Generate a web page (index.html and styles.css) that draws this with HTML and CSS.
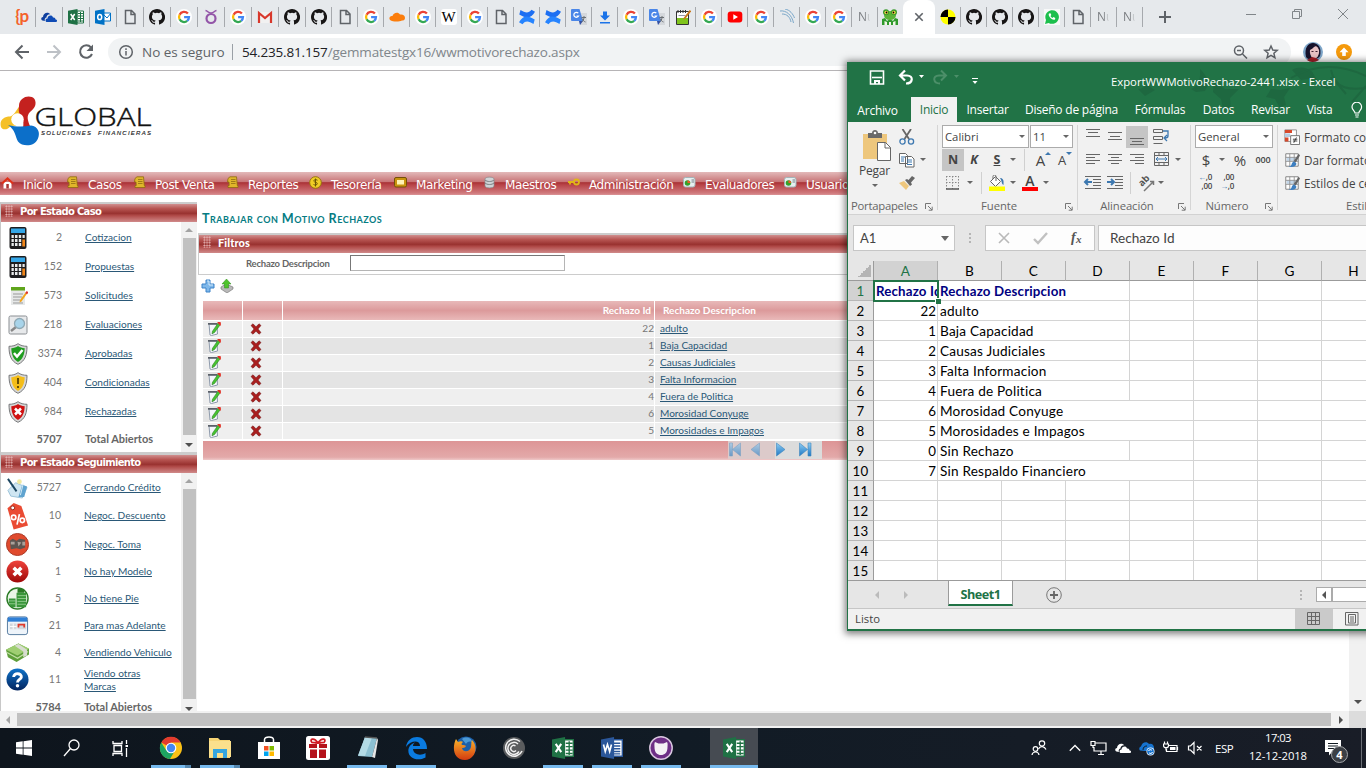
FILE: index.html
```html
<!DOCTYPE html>
<html lang="es">
<head>
<meta charset="utf-8">
<title>Trabajar con Motivo Rechazos</title>
<link rel="stylesheet" href="styles.css">
</head>
<body>
<svg class="defs" width="0" height="0">
<defs>
<linearGradient id="gr-red" x2="0" y2="1"><stop stop-color="#f0433c"/><stop offset="1" stop-color="#9e0808"/></linearGradient>
<linearGradient id="gr-blue" x2="0" y2="1"><stop stop-color="#0e73c9"/><stop offset="1" stop-color="#04245e"/></linearGradient>
<linearGradient id="gr-page" x2="0" y2="1"><stop stop-color="#8fcdf3"/><stop offset="1" stop-color="#1f78c4"/></linearGradient>
<linearGradient id="gr-fox" x2="0" y2="1"><stop stop-color="#f9b32a"/><stop offset="1" stop-color="#d33a10"/></linearGradient>
</defs>
<symbol id="g" viewBox="0 0 16 16"><circle cx="8" cy="8" r="8" fill="#fff"/><g fill="none" stroke-width="2.3"><path d="M11.9 4.6A5 5 0 0 0 3.6 5.7" stroke="#ea4335"/><path d="M3.6 5.7A5 5 0 0 0 3.6 10.3" stroke="#fbbc05"/><path d="M3.6 10.3A5 5 0 0 0 11.2 11.9" stroke="#34a853"/><path d="M11.2 11.9A5 5 0 0 0 13 8.1H8.1" stroke="#4285f4"/></g></symbol>
<symbol id="gh" viewBox="0 0 16 16"><path fill="#171515" d="M8 0C3.6 0 0 3.6 0 8c0 3.5 2.3 6.500 5.500 7.600.4.100.550-.170.550-.380v-1.500c-2.200.500-2.700-.940-2.700-.940-.360-.920-.890-1.170-.890-1.170-.730-.500.050-.490.050-.490.800.060 1.230.830 1.230.830.710 1.230 1.870.870 2.330.660.070-.520.280-.870.500-1.070-1.780-.200-3.640-.890-3.640-3.950 0-.870.310-1.590.820-2.150-.080-.200-.360-1.020.080-2.120 0 0 .670-.210 2.200.820a7.600 7.600 0 0 1 4 0c1.530-1.040 2.200-.820 2.200-.820.440 1.100.160 1.920.080 2.120.510.560.820 1.270.820 2.150 0 3.070-1.870 3.750-3.650 3.950.290.250.540.730.540 1.480v2.200c0 .210.150.460.550.380A8 8 0 0 0 8 0"/></symbol>
<symbol id="doc" viewBox="0 0 16 16"><path d="M3.500 1.500h6l3.500 3.500v9.500H3.500zM9 1.500V5.500h4" fill="none" stroke="#5f6368" stroke-width="1.500"/></symbol>
<symbol id="xl" viewBox="0 0 16 16"><path d="M9 2h6.500v12H9z" fill="#fff" stroke="#207245"/><path d="M10 4.500h5M10 7h5M10 9.500h5M10 12h5M12.500 3v10" stroke="#207245"/><path d="M0 1.800L9.500 0v16L0 14.200z" fill="#1f7145"/><path d="M2.700 5l4 6M6.700 5l-4 6" stroke="#fff" stroke-width="1.500"/></symbol>
<symbol id="wd" viewBox="0 0 16 16"><path d="M9 2h6.500v12H9z" fill="#fff" stroke="#2b579a"/><path d="M9 4.500h5M9 6.500h5M9 8.500h5M9 10.500h5M9 12.300h5" stroke="#2b579a"/><path d="M0 1.800L9.500 0v16L0 14.200z" fill="#2b579a"/><path d="M1.800 5.500l1.300 5 1.600-5 1.600 5 1.300-5" stroke="#fff" stroke-width="1.200" fill="none"/></symbol>
<symbol id="out" viewBox="0 0 16 16"><path d="M8 4h7.500v8H8z" fill="#fff" stroke="#0072c6"/><path d="M8 5l4 4 4-5" fill="none" stroke="#0072c6"/><path d="M0 1.800L9.500 0v16L0 14.200z" fill="#0072c6"/><ellipse cx="4.700" cy="8" rx="2" ry="2.600" fill="none" stroke="#fff" stroke-width="1.500"/></symbol>
<symbol id="od" viewBox="0 0 16 16"><path d="M1.500 11.500C-.5 11 0 8 2 8c0-4 5-6 7.500-2.600C7 5 5.500 7 5.500 8.500 3.500 9 3.500 11 4 12z" fill="#0f3f9e"/><path d="M6 13c-2 0-2-3.500.5-3.500C6.500 6.500 11 5 12 8.500c2-.5 2.500 1 2.300 1.800C16.500 10.500 16.500 13 15 13z" fill="#0f4bb5"/></symbol>
<symbol id="conf" viewBox="0 0 16 16"><path d="M1.500 1C6 3.500 9 5 12.500.8L16 2.800C12 9.500 8 10 .3 5.500z" fill="#1d6ff2"/><path d="M14.500 15C10 12.500 7 11 3.500 15.200L0 13.200C4 6.500 8 6 15.700 10.500z" fill="#2684ff"/></symbol>
<symbol id="tr" viewBox="0 0 16 16"><path d="M6 4h10v12H9z" fill="#d5d8dc"/><path d="M1 0h7.500l3.500 12H1a1 1 0 0 1-1-1V1a1 1 0 0 1 1-1" fill="#4a86e8"/><path d="M8 12h4l-3 4z" fill="#3150a8"/><path d="M7.300 4.200A2.500 2.500 0 1 0 7.600 7H5.500" stroke="#fff" fill="none" stroke-width="1.200"/><path d="M10.500 8.500H15M13 7v1.500c0 2-1.500 4-2.500 4.500M11 9.500c1 2 2 3 3.500 3.500" stroke="#6b7075" fill="none"/></symbol>
<symbol id="cal" viewBox="0 0 20 24"><rect x="1.500" y="1" width="17" height="22" rx="2" fill="#1d1d1f"/><rect x="3" y="2.500" width="14" height="4.500" fill="#35a7e8"/><g fill="#e9ebec"><path d="M3.500 9h2.300v3H3.500zM7 9h2.500v3H7zM10.800 9h2.400v3h-2.400zM14.500 9h2.200v3h-2.200zM3.500 13h2.300v3H3.500zM7 13h2.500v3H7zM10.800 13h2.400v3h-2.400zM3.500 17h2.300v3H3.500zM7 17h2.500v3H7zM10.800 17h2.400v3h-2.400z"/></g><path d="M14.300 13.500H17v7h-2.700z" fill="#f08519"/></symbol>
<symbol id="shield" viewBox="0 0 20 22"><path d="M10 .7C7.500 2.500 4.500 3.300 1 3.300c0 8 1.500 14.700 9 18 7.500-3.300 9-10 9-18-3.500 0-6.500-.8-9-2.600z" fill="#d6d6d6" stroke="#77797b"/><path d="M10 3C8 4.500 6 5 3.300 5.300c.2 6 1.700 11 6.700 13.700 5-2.700 6.500-7.700 6.700-13.700C14 5 12 4.500 10 3z" fill="currentColor"/></symbol>
<symbol id="edit" viewBox="0 0 13 14"><path d="M1.500 2h8l.5 10-6 1.500-1.500-.5z" fill="#f3f6fa" stroke="#8f9bac"/><path d="M.5 1h9.500v1.700H.5z" fill="#5b6069"/><path d="M12.500 3L7 10.500l-2.500 1.300.5-2.600L10.500 1.200z" fill="#45c430" stroke="#2a7d1f" stroke-width=".6"/><path d="M10.300.5h2.500v2.800z" fill="#e33226" stroke="#e33226"/></symbol>
<symbol id="del" viewBox="0 0 12 12"><path d="M1 2.500L3 .8l3 3 3-3 2 1.700-3 3.500 3 3.500-2 1.700-3-3-3 3-2-1.700L4 6z" fill="#a91f1f" stroke="#6b1212" stroke-width=".5"/></symbol>
<symbol id="scroll" viewBox="0 0 13 13"><path d="M4 .8h6.500l.8 8.700H12v2H2v-2h1.200L3 6H1.500l.5-3.500z" fill="#e0b62b" stroke="#8e6b10" stroke-width=".8"/><path d="M5 3.500h4.500M5 5.500h4.500M5 7.500h4.500" stroke="#a07c17"/></symbol>
<symbol id="eval" viewBox="0 0 13 12"><rect x=".5" y="1" width="11.500" height="9.500" rx="2" fill="#e6eff0" stroke="#a2b4b8"/><circle cx="4.500" cy="6.500" r="2.800" fill="#34a229"/><path d="M4.500 3.700V6.500H7.300a3 3 0 0 0-2.800-2.800" fill="#f05a28"/><path d="M8.500 3.500H11M8.500 5.500H11" stroke="#728088"/></symbol>
<symbol id="dlg" viewBox="0 0 8 8"><path d="M.5 6V.5H6M3 3l4 4M7.200 3.700v3.500H3.700" fill="none" stroke="#777"/></symbol>
<symbol id="brush" viewBox="0 0 18 18"><path d="M2 2h14v14H2z" fill="#fff" stroke="#7a7a7a"/><path d="M3 6h12v4H3z" fill="#c3d7ea"/><path d="M2 6h14M2 10.500h14M6.500 2v14M11.500 2v14" stroke="#8f8f8f"/><path d="M16.500 2l1.500 2-5 8-2-2z" fill="#666"/><path d="M5 16.500c3 0 3-1 4-4l2-2 3 2.500c0 3-4 5-9 3.500z" fill="#3d7fc1"/></symbol>
</svg>

<div class="screen">
<header class="tabs">
  <div class="tab w27"><span class="fav brk">{p</span></div>
  <div class="tab w27"><svg><use href="#od"/></svg></div>
  <div class="tab w27"><svg><use href="#xl"/></svg></div>
  <div class="tab w27"><svg><use href="#out"/></svg></div>
  <div class="tab w27"><svg><use href="#doc"/></svg></div>
  <div class="tab w27"><svg><use href="#gh"/></svg></div>
  <div class="tab w27"><svg><use href="#g"/></svg></div>
  <div class="tab w27"><svg viewBox="0 0 16 16"><circle cx="8" cy="9.500" r="4.500" fill="none" stroke="#9355a8" stroke-width="2.200"/><path d="M2.500 1.500C5 2 5 4 8 4s3-2 5.500-2.500" fill="none" stroke="#9355a8" stroke-width="1.600"/></svg></div>
  <div class="tab w27"><svg><use href="#g"/></svg></div>
  <div class="tab w27"><svg viewBox="0 0 16 16"><path d="M1 3h14v11H1z" fill="#f1f1f1"/><path d="M2 14V4l6 5 6-5v10" fill="none" stroke="#d8382c" stroke-width="2.200"/></svg></div>
  <div class="tab w27"><svg><use href="#gh"/></svg></div>
  <div class="tab"><svg><use href="#gh"/></svg></div>
  <div class="tab"><svg><use href="#doc"/></svg></div>
  <div class="tab"><svg><use href="#g"/></svg></div>
  <div class="tab"><svg viewBox="0 0 16 16"><path d="M1 11C-.5 9 1 6.500 3.500 7 4 4 9 2 11 5.500c3-.5 5 1 5 3.500 0 2-1.500 2.500-3 2.500-3 1.500-9 1.500-12-.5" fill="#fb7d0c"/></svg></div>
  <div class="tab"><svg><use href="#g"/></svg></div>
  <div class="tab"><span class="fav wiki">W</span></div>
  <div class="tab"><svg><use href="#g"/></svg></div>
  <div class="tab"><svg><use href="#doc"/></svg></div>
  <div class="tab"><svg><use href="#conf"/></svg></div>
  <div class="tab"><svg><use href="#conf"/></svg></div>
  <div class="tab"><svg><use href="#tr"/></svg></div>
  <div class="tab"><svg viewBox="0 0 16 16"><path d="M6 2.500h4v4h3L8 11.500 3 6.500h3zM3 13h10v1.500H3z" fill="#1a73e8"/></svg></div>
  <div class="tab"><svg><use href="#g"/></svg></div>
  <div class="tab"><svg><use href="#tr"/></svg></div>
  <div class="tab"><svg viewBox="0 0 16 16"><path d="M1.500 2.500h12v13h-12z" fill="#fff" stroke="#333"/><path d="M2 9h11v6H2z" fill="#7fc41c"/><path d="M3 1v3M5.500 1v3M8 1v3M10.500 1v3" stroke="#333"/><path d="M3.500 6.500h7" stroke="#99a"/><path d="M15.500 1.500L9 10" stroke="#c9781c" stroke-width="2"/></svg></div>
  <div class="tab"><svg><use href="#g"/></svg></div>
  <div class="tab"><svg viewBox="0 0 16 16"><rect x=".7" y="2.500" width="14.600" height="11" rx="3" fill="#f00"/><path d="M6.300 5.300v5.400L11 8z" fill="#fff"/></svg></div>
  <div class="tab"><svg><use href="#g"/></svg></div>
  <div class="tab"><svg viewBox="0 0 16 16"><path d="M1 2c6-1 12 4 13.500 12M3 5c5 0 8 3 9 8M6 0c5 1 8 5 9.500 9" fill="none" stroke="#7aa7c9"/></svg></div>
  <div class="tab"><svg><use href="#g"/></svg></div>
  <div class="tab"><svg><use href="#g"/></svg></div>
  <div class="tab"><span class="fav cut">Nu</span></div>
  <div class="tab bare"><svg viewBox="0 0 16 16"><path d="M0 16V10l3-1 2 3 3-2 3 2 2-3 3 1v6z" fill="#2f9a2c"/><path d="M2.500 16v-4l2.500 1v3zM11 16v-3l2.500-1v4zM7 13h2v3H7z" fill="#f1f5e8"/><ellipse cx="8" cy="6.500" rx="6" ry="4.500" fill="#5cb338"/><circle cx="4" cy="3.300" r="3" fill="#3a9a2c"/><circle cx="12" cy="3.300" r="3" fill="#3a9a2c"/><circle cx="4.200" cy="3.500" r="1.800" fill="#ffe14a"/><circle cx="11.800" cy="3.500" r="1.800" fill="#ffe14a"/><circle cx="4.500" cy="3.500" r=".9"/><circle cx="11.500" cy="3.500" r=".9"/></svg></div>
  <div class="tab on"><svg viewBox="0 0 16 16"><path d="M4.300 4.300l7.400 7.400M11.700 4.300l-7.400 7.400" stroke="#5f6368" stroke-width="1.600"/></svg></div>
  <div class="tab"><svg viewBox="0 0 16 16"><circle cx="8" cy="8" r="7.500" fill="#ff0"/><path d="M8 8V.5A7.500 7.500 0 0 1 15.500 8zM8 8v7.500A7.500 7.500 0 0 1 .5 8z" fill="#000" transform="rotate(-90 8 8)"/></svg></div>
  <div class="tab"><svg><use href="#gh"/></svg></div>
  <div class="tab"><svg><use href="#gh"/></svg></div>
  <div class="tab"><svg><use href="#gh"/></svg></div>
  <div class="tab"><svg viewBox="0 0 16 16"><path d="M0 0h16v16H0z" fill="#fff" opacity=".7"/><path d="M1 15l1-4a6.800 6.800 0 1 1 2.700 2.900z" fill="#1dbf4d"/><path d="M5 4.500c-1.500 2 3 7.500 6 6l.3-1.500-1.800-1-1 1C7.500 8.500 7 8 6.500 7l.8-1-.8-1.700z" fill="#fff"/></svg></div>
  <div class="tab"><svg><use href="#doc"/></svg></div>
  <div class="tab"><span class="fav cut">Nu</span></div>
  <div class="tab"><span class="fav cut">Nu</span></div>
  <svg class="newtab" viewBox="0 0 12 12"><path d="M6 0v12M0 6h12" stroke="#5f6368" stroke-width="2"/></svg>
  <svg class="winbtns" viewBox="0 0 104 12"><path d="M0 6.500h10M46.500 3.500h7v7h-7zM48.500 3.500v-2h7v7h-2M92 1l10 10M102 1L92 11" fill="none" stroke="#808589"/></svg>
</header>

<div class="bar">
  <svg class="nav" viewBox="0 0 84 20"><g fill="none" stroke-width="2"><path d="M16 10H3.500M9.500 3.500L3 10l6.500 6.500" stroke="#5f6368"/><path d="M34 10h12.500M40.500 3.500L47 10l-6.500 6.500" stroke="#bdc1c6"/><path d="M78 5.500A6.200 6.200 0 1 0 79 12" stroke="#5f6368"/></g><path d="M80 2.500v6.500h-6.500z" fill="#5f6368"/></svg>
  <div class="omni">
    <svg class="info" viewBox="0 0 16 16"><circle cx="8" cy="8" r="6.300" fill="none" stroke="#5f6368" stroke-width="1.500"/><path d="M8 7v4.500M8 4.300v1.600" stroke="#5f6368" stroke-width="1.500"/></svg>
    <span class="unsafe">No es seguro</span><i class="vline"></i><span class="url"><b>54.235.81.157</b>/gemmatestgx16/wwmotivorechazo.aspx</span>
    <svg class="omni-r" viewBox="0 0 48 16"><g fill="none" stroke="#5f6368" stroke-width="1.500"><circle cx="6" cy="6.500" r="4.500"/><path d="M9.500 10l4.500 4.500M4 6.500h4M38 2l1.800 4 4.400.4-3.300 2.900 1 4.300L38 11.300l-3.900 2.300 1-4.300-3.300-2.900 4.400-.4z"/></g></svg>
  </div>
  <svg class="avatar" viewBox="0 0 20 20"><circle cx="10" cy="10" r="10" fill="#7ea6c9"/><path d="M3 15C1 6 5 1 10 1s9 5 7 13c-2 4-11 5-14 1" fill="#17122b"/><ellipse cx="11.500" cy="10" rx="4.600" ry="6.300" fill="#e8c2c4"/><path d="M6 8c3 0 4-3 7-4L9 2 6 4z" fill="#17122b"/><path d="M8.500 9.500h2M12.500 9.500h2" stroke="#402030"/><path d="M4 18l5-3 4 1 3 2c-4 2.500-9 2.500-12 0" fill="#a81f27"/></svg>
  <svg class="upd" viewBox="0 0 16 16"><circle cx="8" cy="8" r="8" fill="#f59a0c"/><path d="M8 3.500L3.500 8.300h2.700V12h3.600V8.300h2.700z" fill="#fff"/></svg>
</div>

<main class="page">
  <div class="brand">
    <svg width="156" height="56" viewBox="0 0 156 56">
      <path d="M1 33c-2-7 3-10.500 9-10.500 4-1 6-6 9-9.500l3 7c-5 2-8 6-6 12-5-1-6 1-8 2.500-3 1.500-6 1-7-1.500" fill="#f5c026"/>
      <path d="M19 12C19 3 30 0 34.500 5c2.500 5 .5 9-4.500 13-4 4-2 9 0 14l-7 2c1-6 0-10-3-13-1.500-3-1.500-6-1-9" fill="#c4211f"/>
      <path d="M8 31c8 2 16 2 23 .5 7 1 9.500 7 7 13-3 8-15 9-20 3-3-5-2-11-10-16.500" fill="#0c6fc9"/>
      <circle cx="17.500" cy="25.500" r="6.300" fill="#fff"/>
      <text class="logo1" x="34.500" y="31.500" textLength="117" lengthAdjust="spacingAndGlyphs">GLOBAL</text>
      <text class="logo2" x="41" y="40.500" textLength="50" lengthAdjust="spacing">SOLUCIONES</text>
      <text class="logo2" x="98" y="40.500" textLength="53" lengthAdjust="spacing">FINANCIERAS</text>
    </svg>
  </div>
  <nav class="menu">
    <a style="width:65px"><svg viewBox="0 0 13 13"><path d="M2.500 6h8v6.500h-8z" fill="#fff"/><path d="M0 7l6.500-6L13 7l-2 1-4.500-4L2 8z" fill="#e03018"/><path d="M5.300 8h2.500v4.500H5.300z" fill="#a33"/></svg>Inicio</a>
    <a style="width:67px"><svg><use href="#scroll"/></svg>Casos</a>
    <a style="width:93px"><svg><use href="#scroll"/></svg>Post Venta</a>
    <a style="width:83px"><svg><use href="#scroll"/></svg>Reportes</a>
    <a style="width:85px"><svg viewBox="0 0 13 13"><circle cx="6.500" cy="6.500" r="5.800" fill="#f0cd26" stroke="#96780b"/><path d="M8.500 4.200C6.500 3 4.500 4 4.800 5.200c.4 1.300 3.500.8 3.500 2.500C8.300 9 6 9.500 4.500 8.500M6.500 2.500v8" fill="none" stroke="#6d5605"/></svg>Tesorería</a>
    <a style="width:89px"><svg viewBox="0 0 13 13"><rect x=".5" y="1.500" width="12" height="9.500" rx="1.500" fill="#c8930e" stroke="#74500a"/><path d="M3 4h7v4.500H3z" fill="#fff3b5"/></svg>Marketing</a>
    <a style="width:84px"><svg viewBox="0 0 13 13"><path d="M2 3c0-2.500 9-2.500 9 0v7c0 2.500-9 2.500-9 0z" fill="#cfd3d6" stroke="#85898c" stroke-width=".7"/><path d="M2 4c2 2 7 2 9 0M2 7c2 2 7 2 9 0" fill="none" stroke="#7b8083"/></svg>Maestros</a>
    <a style="width:116px"><svg viewBox="0 0 13 13"><circle cx="9.500" cy="6" r="2.500" fill="none" stroke="#e0b617" stroke-width="1.800"/><path d="M7 6H1M3 6v2.500" stroke="#e0b617" stroke-width="1.800"/></svg>Administración</a>
    <a style="width:101px"><svg><use href="#eval"/></svg>Evaluadores</a>
    <a style="width:80px"><svg><use href="#eval"/></svg>Usuarios</a>
  </nav>

  <div class="cols">
    <aside class="side">
      <section class="box b1">
        <h2 class="cap"><i class="grip"></i>Por Estado Caso</h2>
        <div class="body">
          <ul class="list">
            <li><svg class="ic"><use href="#cal"/></svg><b>2</b><a>Cotizacion</a></li>
            <li><svg class="ic"><use href="#cal"/></svg><b>152</b><a>Propuestas</a></li>
            <li><svg class="ic" viewBox="0 0 20 24"><path d="M3 3h14v18H3z" fill="#e6e8e8"/><path d="M3 3h14v3.500H3z" fill="#5fa51c"/><path d="M5 10h10M5 13h9M5 16h7M5 19h10" stroke="#999"/><path d="M19.500 9l-6 8.500-2 1 .5-2.500L18 8z" fill="#f2a51c"/><path d="M18 8l1.800 1.300" stroke="#d33" stroke-width="2.500"/></svg><b>573</b><a>Solicitudes</a></li>
            <li><svg class="ic" viewBox="0 0 20 24"><rect x="1" y="3" width="18" height="18" rx="1.500" fill="#e7e9eb" stroke="#8b8f93"/><path d="M3 18l5-4" stroke="#888" stroke-width="2.500"/><circle cx="11.500" cy="10.500" r="5" fill="#a8d4ea" stroke="#8fa9b5" stroke-width="1.300"/></svg><b>218</b><a>Evaluaciones</a></li>
            <li><svg class="ic sh c-green" viewBox="0 0 20 22"><use href="#shield"/><path d="M6 10l3 3.500 5.500-6.500" fill="none" stroke="#fff" stroke-width="2.500"/></svg><b>3374</b><a>Aprobadas</a></li>
            <li><svg class="ic sh c-yel" viewBox="0 0 20 22"><use href="#shield"/><path d="M10 6v6M10 14v2" stroke="#5a4300" stroke-width="1.800"/></svg><b>404</b><a>Condicionadas</a></li>
            <li><svg class="ic sh c-red" viewBox="0 0 20 22"><use href="#shield"/><path d="M7 7.500l6 6M13 7.500l-6 6" stroke="#fff" stroke-width="2.500"/></svg><b>984</b><a>Rechazadas</a></li>
            <li class="tot"><span class="ic"></span><b>5707</b><span>Total Abiertos</span></li>
          </ul>
          <div class="sb"><i class="up"></i><i class="thumb"></i><i class="down"></i></div>
        </div>
      </section>
      <section class="box b2">
        <h2 class="cap"><i class="grip"></i>Por Estado Seguimiento</h2>
        <div class="body">
          <ul class="list two">
            <li style="height:29px"><svg class="ic" viewBox="0 0 24 24"><path d="M2 15l8-8 12 5-5 11-12-2z" fill="#cfe6f2" stroke="#7eb0cc" stroke-width=".7"/><path d="M13 22l4-13 5 2-3 11z" fill="#5fa3cf"/><path d="M15 20l3-12" stroke="#d7ecf7"/><path d="M2 3l9 13" fill="none" stroke="#1d4660" stroke-width="2"/><circle cx="14" cy="6" r="2.500" fill="#f1e9a0"/></svg><b>5727</b><a>Cerrando Crédito</a></li>
            <li style="height:27px"><svg class="ic tall" viewBox="0 0 24 28"><path d="M1.500 6L8 .5l8 3L23 24 8 28z" fill="#ea4b33"/><circle cx="7" cy="5.500" r="2" fill="#fff" stroke="#93281c"/><g fill="none" stroke="#fff" stroke-width="1.800"><circle cx="8" cy="15.500" r="2.300"/><circle cx="17" cy="18.500" r="2.300"/><path d="M14 12l-2.500 11"/></g></svg><b>10</b><a>Negoc. Descuento</a></li>
            <li style="height:30px"><svg class="ic" viewBox="0 0 24 24"><circle cx="12" cy="12" r="11.500" fill="#e04a2d" stroke="#a83a28"/><path d="M4 8l3-2 4 2 3-2 6 1v8l-5 2-4-1-6 1z" fill="#5d5550"/><path d="M5 9h4v3H5zM12 9l4 1-3 4zM17 9h3v4h-3z" fill="#aaa19a"/></svg><b>5</b><a>Negoc. Toma</a></li>
            <li style="height:25px"><svg class="ic" viewBox="0 0 24 24"><circle cx="12" cy="12" r="11.500" fill="url(#gr-red)"/><path d="M8 8l8 8M16 8l-8 8" stroke="#fff" stroke-width="3.600"/></svg><b>1</b><a>No hay Modelo</a></li>
            <li style="height:28px"><svg class="ic" viewBox="0 0 24 24"><circle cx="12" cy="12" r="11" fill="#e9f5e6" stroke="#2a7a25" stroke-width="1.500"/><path d="M3 12h7v9H6c-3-2-3-5-3-9M11 6h10v15H11z" fill="#39963a"/><path d="M3 14.500h7M3 17.500h7M12 9h9M12 12h9M12 15h9M12 18h9" stroke="#a5d8a0" stroke-width=".8"/><path d="M12 2h7v4h-7z" fill="#2a7a25"/></svg><b>5</b><a>No tiene Pie</a></li>
            <li style="height:27px"><svg class="ic" viewBox="0 0 24 24"><rect x="1.500" y="3" width="21" height="18.500" rx="2.500" fill="#eef4fa" stroke="#53789e"/><path d="M2 3.500h20V8H2z" fill="#2f7fd6"/><path d="M4 10h7v6H4zM12 10h9v6h-9z" fill="#d3d8dd"/><path d="M7.500 10v6M4 13h7" stroke="#fff"/><path d="M13 14v-3h6v3" fill="none" stroke="#e03a2c" stroke-width="1.800"/></svg><b>21</b><a>Para mas Adelante</a></li>
            <li style="height:27px"><svg class="ic" viewBox="0 0 24 24"><path d="M0 9l13-6.500L24 8v6L11 22 2 17z" fill="#5f9f3a"/><path d="M0 9l13-6.500L24 8l-12 7z" fill="#9fce72"/><path d="M1 12l11 6 11-7" stroke="#c4e0a6" stroke-width="1.300" fill="none"/><path d="M9 5l4-2 9 6v6l-4 2v-6z" fill="#d7dccf"/></svg><b>4</b><a>Vendiendo Vehiculo</a></li>
            <li style="height:27px"><svg class="ic" viewBox="0 0 24 24"><circle cx="12" cy="12" r="11.500" fill="url(#gr-blue)"/><path d="M8 9.500C8 4.500 16.500 5 16 9.500c-.3 2.500-4 2.500-4 5.500" fill="none" stroke="#fff" stroke-width="3"/><circle cx="12" cy="18.500" r="1.800" fill="#fff"/></svg><b>11</b><a>Viendo otras<br>Marcas</a></li>
            <li class="tot" style="height:27px"><span class="ic"></span><b>5784</b><span>Total Abiertos</span></li>
          </ul>
          <div class="sb"><i class="up"></i><i class="thumb"></i><i class="down"></i></div>
        </div>
      </section>
    </aside>

    <section class="work">
      <h1>Trabajar con Motivo Rechazos</h1>
      <div class="filter">
        <h2 class="cap"><i class="grip"></i>Filtros</h2>
        <div class="frow"><label>Rechazo Descripcion</label><input type="text"></div>
      </div>
      <div class="acts">
        <svg viewBox="0 0 14 14"><path d="M5 1h4v4h4v4H9v4H5V9H1V5h4z" fill="#7fb8ea" stroke="#3d83c9" stroke-linejoin="round"/><path d="M6 2h2v4h4" stroke="#d3e9fa" fill="none"/></svg>
        <svg viewBox="0 0 14 14"><path d="M1 8l5-3 7 3v2l-6 4-6-4z" fill="#b9b9b9" stroke="#6f6f6f" stroke-width=".6"/><path d="M6.500 0L11 5H8.500v4h-4V5H2z" fill="#4fc42c" stroke="#2f8a1c" stroke-width=".5"/></svg>
      </div>
      <div class="grid">
        <div class="gr hd"><span></span><span></span><span class="n">Rechazo Id</span><span class="d">Rechazo Descripcion</span></div>
        <div class="gr"><span><svg class="e"><use href="#edit"/></svg></span><span><svg class="x"><use href="#del"/></svg></span><span class="n">22</span><span class="d"><a>adulto</a></span></div>
        <div class="gr alt"><span><svg class="e"><use href="#edit"/></svg></span><span><svg class="x"><use href="#del"/></svg></span><span class="n">1</span><span class="d"><a>Baja Capacidad</a></span></div>
        <div class="gr"><span><svg class="e"><use href="#edit"/></svg></span><span><svg class="x"><use href="#del"/></svg></span><span class="n">2</span><span class="d"><a>Causas Judiciales</a></span></div>
        <div class="gr alt"><span><svg class="e"><use href="#edit"/></svg></span><span><svg class="x"><use href="#del"/></svg></span><span class="n">3</span><span class="d"><a>Falta Informacion</a></span></div>
        <div class="gr"><span><svg class="e"><use href="#edit"/></svg></span><span><svg class="x"><use href="#del"/></svg></span><span class="n">4</span><span class="d"><a>Fuera de Politica</a></span></div>
        <div class="gr alt"><span><svg class="e"><use href="#edit"/></svg></span><span><svg class="x"><use href="#del"/></svg></span><span class="n">6</span><span class="d"><a>Morosidad Conyuge</a></span></div>
        <div class="gr"><span><svg class="e"><use href="#edit"/></svg></span><span><svg class="x"><use href="#del"/></svg></span><span class="n">5</span><span class="d"><a>Morosidades e Impagos</a></span></div>
        <div class="foot"><svg width="94" height="18" viewBox="0 0 94 18"><path d="M0 0h47v18H0z" fill="#dccaca"/><path d="M47 0h47v18H47z" fill="#dcdcdc"/><g fill="url(#gr-page)" stroke="#3f86bd" stroke-width=".6"><path d="M1.500 2h3v13h-3zM12.500 2v13l-8-6.500zM31.500 2v13L23 8.500z" opacity=".6"/><path d="M48.500 2v13L57 8.500zM71.500 2v13l8-6.500zM80 2h3v13h-3z"/></g></svg></div>
      </div>
    </section>
    <div class="sb pagesb"><i class="down"></i></div>
  </div>
  <div class="hs"><i class="la"></i><i class="hthumb"></i><i class="ra"></i><i class="corner"></i></div>
</main>

<footer class="task">
  <div class="sys"><svg width="16" height="16" viewBox="0 0 16 16"><path d="M0 2.200L6.700 1.300V7.500H0zM7.500 1.200L16 0v7.500H7.500zM0 8.400h6.700v6.300L0 13.800zM7.500 8.400H16V16l-8.500-1.200z" fill="#fff"/></svg></div>
  <div class="sys"><svg width="18" height="18" viewBox="0 0 18 18"><circle cx="11" cy="6" r="5" fill="none" stroke="#fff" stroke-width="1.300"/><path d="M7.500 9.500L1 17" stroke="#fff" stroke-width="1.300"/></svg></div>
  <div class="sys"><svg width="17" height="17" viewBox="0 0 17 17"><path d="M1 1v2.500h9V1M2 5.500h7.500v6H2zM1 16v-2.500h9V16M14.500 0v4M14.500 8v9" fill="none" stroke="#fff" stroke-width="1.300"/><path d="M13.500 5h2.500v2h-2.500z" fill="#fff"/></svg></div>
  <div class="app run multi first"><svg viewBox="0 0 24 24"><circle cx="12" cy="12" r="11" fill="#fbc116"/><path d="M12 12L2.300 6.500A11.100 11.100 0 0 1 21.700 6.500z" fill="#e33b2e"/><path d="M2.300 6.500A11 11 0 0 0 11 23l5-8.500-9-.5z" fill="#1da462"/><path d="M12 6.500h9.700L17 15z" fill="#fbc116"/><circle cx="12" cy="12" r="5.300" fill="#fff"/><circle cx="12" cy="12" r="4.200" fill="#4587f3"/></svg></div>
  <div class="app run multi"><svg viewBox="0 0 24 24"><path d="M1 2h9l2 2h10v18H1z" fill="#f6d474"/><path d="M1 5h22v16H1z" fill="#fbe08c"/><path d="M5 22v-9h14v9h-4v-5H9v5z" fill="#35a6e0"/></svg></div>
  <div class="app"><svg viewBox="0 0 24 24"><path d="M7.500 7V3.500C8 0 16 0 16.500 3.500V7" fill="none" stroke="#fff" stroke-width="1.500"/><path d="M1 6h22v17H1z" fill="#fff"/><path d="M7 10h4.500v4.500H7z" fill="#f25022"/><path d="M12.500 10H17v4.500h-4.500z" fill="#7fba00"/><path d="M7 15.500h4.500V20H7z" fill="#00a4ef"/><path d="M12.500 15.500H17V20h-4.500z" fill="#ffb900"/></svg></div>
  <div class="app"><svg viewBox="0 0 24 24"><rect width="24" height="24" rx="2.500" fill="#fff"/><path d="M3 8h8v4H3zM13 8h8v4h-8zM4 13.500h7V22H4zM13 13.500h7V22h-7z" fill="#b5121b"/><path d="M12 7C8 1 3 3 6 6.500zM12 7c4-6 9-4 6-.5z" fill="none" stroke="#d01923" stroke-width="1.800"/></svg></div>
  <div class="app run"><svg viewBox="0 0 24 24"><path d="M10 1l12 1-5 19-14-1z" fill="#8cc0d2"/><path d="M10 1l7 .5L10 20l-7-.5z" fill="#b4dbe6"/><path d="M17 21l5-19 1 2-3 18z" fill="#e6e6e6"/><path d="M10 1l12 1" stroke="#555" stroke-width="1.500"/></svg></div>
  <div class="app run"><svg viewBox="0 0 24 24"><path d="M2 11C3 4 8 1 13 1c6 0 10 4.500 10 12H9c.5 6 8 7 12.500 4v4.500C13 26 3 22 4.500 13 5.500 9 9 7 11 6.500 9 8 9 9 9 10h7c0-6-9-6-14 1z" fill="#0a7be0"/></svg></div>
  <div class="app"><svg viewBox="0 0 24 24"><circle cx="13" cy="11" r="10.500" fill="#1c5fa8"/><path d="M9 3c4-3 10-1 10 3-3-1-5 0-6 2z" fill="#4d9ad5"/><path d="M3 3l2 3c2-1 4-1 5 0-1 1-2 2-1 3 2 0 3 0 4 1-1 2-3 2-4 2 1 5 8 4 9-1 .5-3 0-5 1-7 7 7 3 20-7 20C0 24-1 11 3 3z" fill="url(#gr-fox)"/></svg></div>
  <div class="app"><svg viewBox="0 0 24 24"><circle cx="12" cy="12" r="11" fill="#5a5c5e"/><path d="M20 15a8.500 8.500 0 1 1-2-9.500M17 15.500a6 6 0 1 1-1-7.500M14 14.500a3 3 0 1 1-.5-4.500" fill="none" stroke="#f1f1f1" stroke-width="1.500"/></svg></div>
  <div class="app run"><svg class="sm"><use href="#xl"/></svg></div>
  <div class="app run"><svg class="sm"><use href="#wd"/></svg></div>
  <div class="app run"><svg viewBox="0 0 24 24"><circle cx="12" cy="12" r="11.200" fill="#6e2f86" stroke="#d8c6df" stroke-width="1.500"/><path d="M6 6l3.500 1.500h5L18 6c1 2 .5 3 .5 5 0 6-3 8-6.500 8s-6.500-2-6.500-8c0-2-.5-3 .5-5" fill="#f4f1f5"/></svg></div>
  <div class="app cur"><svg class="sm"><use href="#xl"/></svg></div>
  <div class="tray">
    <svg class="t1" viewBox="0 0 16 16"><g fill="none" stroke="#fff" stroke-width="1.200"><circle cx="11" cy="3.500" r="2.700"/><path d="M7.500 9C9 5.500 13.500 6 15 9.500"/><circle cx="4.500" cy="9" r="2.300"/><path d="M1 15c.5-4 6.500-4 7 0"/></g></svg>
    <svg class="t2" viewBox="0 0 12 8"><path d="M.8 6.800L6 1.500l5.200 5.300" fill="none" stroke="#fff" stroke-width="1.300"/></svg>
    <svg class="t3" viewBox="0 0 17 16"><path d="M5.500 3H16v8H4V7M8 14.500h6M11 11v3.500M1 1.500h4v4H1zM3 5.500V8" fill="none" stroke="#fff" stroke-width="1.200"/></svg>
    <svg class="t4" viewBox="0 0 16 16"><path d="M1.500 11.500C-.5 11 0 8 2 8c0-4 5-6 7.500-2.600C7 5 5.500 7 5.500 8.500 3.500 9 3.500 11 4 12zM6 13c-2 0-2-3.500.5-3.500C6.500 6.500 11 5 12 8.500c2-.5 2.500 1 2.300 1.800C16.500 10.500 16.500 13 15 13z" fill="#fff"/></svg>
    <svg class="t4" viewBox="0 0 16 16"><path d="M1 10.500C-.5 9 .5 6.500 2 6.500 3 2 8 1 10 4c3-1 5 1 5 4v3H6z" fill="#1673cf"/><path d="M4 10c0-3 2-4 4-4" fill="none" stroke="#111a22"/><circle cx="11.500" cy="11.500" r="4" fill="#fff"/><circle cx="11.500" cy="11.500" r="3.300" fill="#1673cf"/><path d="M9.500 11A2 2 0 0 1 13 10.500M13.500 12A2 2 0 0 1 10 12.700" fill="none" stroke="#fff"/></svg>
    <svg class="t4" viewBox="0 0 16 16"><path d="M6 5.500h8v6H3.500V9M14.500 7v3M1.500 1.500V4M4.500 1.500V4M.5 4h5v1.500c0 3-5 3-5 0zM3 7v3.500" fill="none" stroke="#fff" stroke-width="1.200"/><path d="M7 7h5.500v3H7z" fill="#fff"/></svg>
    <svg class="t4" viewBox="0 0 16 16"><path d="M1.500 6h2L7 2.500v11L3.500 10h-2zM10 6l4.500 4.500M14.500 6L10 10.500" fill="none" stroke="#fff" stroke-width="1.200"/></svg>
    <span class="esp">ESP</span>
    <div class="clock"><span>17:03</span><span>12-12-2018</span></div>
    <div class="noti"><svg viewBox="0 0 16 16"><path d="M0 0h16v12H7l-3 3.500V12H0z" fill="#fff"/><path d="M3 3.500h10M3 6h10M3 8.500h7" stroke="#111a22"/></svg><em>4</em></div>
    <i class="peek"></i>
  </div>
</footer>

<section class="excel">
  <div class="xtitle">
    <svg class="birds" viewBox="0 0 270 60"><g fill="#1e6840" stroke="#1e6840"><path d="M42 27c8 0 7-6 13-9l-1 7 5 3-10 6zM104 7c8 8 10 14 5 22l-9 1-5-3c10-4 9-12 9-20M118 20l11 7 14 0-9 9 1 12-8-1-2-10-8-7zM170 35l5-8 9 1 10-2-6 9 2 8-6 3-5-9zM196 8c10-5 20-2 23 8l-14 2z" stroke="none"/><path d="M195 16c20-12 45-16 75-2M215 10c10 20 25 20 20 5M235 8c4 20 20 20 35 18M240 20l10 12M256 40l14-16" fill="none" stroke-width="2"/></g></svg>
    <svg class="qat" viewBox="0 0 112 18"><g fill="none" stroke="#fff"><path d="M1.500 2h13v13h-13z" stroke-width="1.600"/><path d="M3 8.500h10" stroke-width="1.600"/><path d="M32 6.500h6c7 0 6 8-1 8M36 1.500l-5 5 5 5" stroke-width="2.200"/><g stroke="#4c8f69"><path d="M76 6.500h-6c-7 0-6 8 1 8M72 1.500l5 5-5 5" stroke-width="2"/></g><path d="M103 9.500h6"/></g><path d="M5 11h6v4H9v-2H7v2H5zM50 6h5l-2.500 3zM103.500 12h5l-2.500 3z" fill="#fff"/><path d="M85 6h5l-2.500 3z" fill="#4c8f69"/></svg>
    <span class="xname">ExportWWMotivoRechazo-2441.xlsx - Excel</span>
  </div>
  <div class="xtabs"><span style="width:63px">Archivo</span><span class="cur" style="width:46px">Inicio</span><span style="width:61px">Insertar</span><span style="width:107px">Diseño de página</span><span style="width:70px">Fórmulas</span><span style="width:47px">Datos</span><span style="width:57px">Revisar</span><span style="width:41px">Vista</span><svg viewBox="0 0 12 16"><path d="M4 11C4 9 1 8 1 5a4.800 4.800 0 0 1 9.600 0c0 3-2.800 4-2.800 6zM4 13h4M4.500 15h3" fill="none" stroke="#fff" stroke-width="1.200"/></svg></div>

  <div class="ribbon">
    <div class="grp g-clip">
      <div class="clip">
        <div class="paste"><svg width="30" height="32" viewBox="0 0 30 32"><path d="M1 4h24v25H1z" fill="#eec77d"/><path d="M6 3h4c0-4 6-4 6 0h4v5H6z" fill="#6a6a6a"/><circle cx="13" cy="3" r="1.300" fill="#fff"/><path d="M15.500 12.500h8l5 5v13h-13z" fill="#fff" stroke="#666"/><path d="M23 12.500V18h5.500" fill="none" stroke="#666"/></svg><span>Pegar</span><i class="car"></i></div>
        <div class="cc">
          <div class="r"><svg width="16" height="16" viewBox="0 0 16 16"><path d="M3.500 0l6.500 10M12 0L5.500 10" stroke="#666" stroke-width="1.800"/><g fill="none" stroke="#3d78b0" stroke-width="1.300"><circle cx="3.500" cy="12.500" r="2.600"/><circle cx="12" cy="12.500" r="2.600"/></g></svg></div>
          <div class="r"><svg width="16" height="16" viewBox="0 0 16 16"><g fill="#fff" stroke="#666"><path d="M.5 1.500h6l2 2v8h-8zM6.500 4.500h6l2.500 2.500v8H6.500z"/></g><path d="M2 5h4M2 7h3M2 9h3M8 8h5M8 10h5M8 12.500h5" stroke="#3d78b0"/></svg><i class="car" style="margin-left:5px"></i></div>
          <div class="r"><svg width="16" height="16" viewBox="0 0 16 16"><path d="M0 8l5-2 5 5-3 4z" fill="#eec77d"/><path d="M6 5l2-1 1.500 1L13 1l3 2-4 4.500 1 2-2 1.500z" fill="#666"/></svg></div>
        </div>
      </div>
      <div class="gl"><span>Portapapeles</span><svg><use href="#dlg"/></svg></div>
    </div>
    <div class="grp g-font">
      <div class="r"><span class="sel" style="width:87px">Calibri<i class="car"></i></span><span class="sel" style="width:43px">11<i class="car"></i></span></div>
      <div class="r"><b class="tb on">N</b><b class="tb it" style="width:20px">K</b><b class="tb un" style="width:26px">S</b><i class="car"></i><i class="sep" style="margin:0 8px 0 8px"></i><span class="tb big">A</span><i class="tup"></i><span class="tb mid">A</span><i class="tdn"></i></div>
      <div class="r"><svg width="14" height="14" viewBox="0 0 14 14" style="margin-left:4px"><path d="M.5 0v13M6.500 0v13M12.500 0v13M0 .5h13M0 6.500h13" stroke="#888" stroke-dasharray="1.500 1.500"/><path d="M0 13h13" stroke="#555" stroke-width="1.500"/></svg><i class="car" style="margin-left:7px"></i><i class="sep" style="margin:0 6px 0 8px"></i><svg width="18" height="16" viewBox="0 0 18 16"><path d="M2.500 6.500l5-5 5 5-5 5zM5 4V1.500C5-.5 8-.5 8 1.500V6" fill="#fff" stroke="#666"/><path d="M12 3c3 0 4 2 3.500 7-2-1-1.500-4-3.500-7" fill="#3d78b0"/><path d="M1 11.500h16V16H1z" fill="#ff0"/></svg><i class="car" style="margin-left:4px"></i><span class="fcol">A</span><i class="car" style="margin-left:5px"></i></div>
      <div class="gl"><span>Fuente</span><svg><use href="#dlg"/></svg></div>
    </div>
    <div class="grp g-ali">
      <div class="r"><svg class="tb" viewBox="0 0 22 22"><path d="M4 3.500h14M6 6.500h10M4 10.500h14" stroke="#666"/></svg><svg class="tb" viewBox="0 0 22 22"><path d="M4 6.500h14M6 10.500h10M4 13.500h14" stroke="#666"/></svg><svg class="tb on" viewBox="0 0 22 22"><path d="M4 12.500h14M6 15.500h10M4 18.500h14" stroke="#666"/></svg><svg width="24" height="22" viewBox="0 0 24 22"><path d="M5.500 3.500h9v3h-9zM5.500 10.500h9v3h-9zM5.500 17.500h9" fill="none" stroke="#666"/><path d="M15 5h5v5c0 2-2 2-3 2M19 9l-3 3 3 3" fill="none" stroke="#3d78b0" stroke-width="1.300"/></svg></div>
      <div class="r"><svg class="tb" viewBox="0 0 22 22"><path d="M4 5.500h14M4 8.500h9M4 11.500h14M4 14.500h9" stroke="#666"/></svg><svg class="tb" viewBox="0 0 22 22"><path d="M4 5.500h14M7 8.500h8M4 11.500h14M7 14.500h8" stroke="#666"/></svg><svg class="tb" viewBox="0 0 22 22"><path d="M4 5.500h14M9 8.500h9M4 11.500h14M9 14.500h9" stroke="#666"/></svg><svg width="24" height="22" viewBox="0 0 24 22"><path d="M6.500 3.500h14v13h-14zM6.500 6.500h14M6.500 13.500h14M11 3v3M16 3v3M11 14v3M16 14v3" fill="none" stroke="#666"/><path d="M8 10h11M10 8l-2 2 2 2M17 8l2 2-2 2" fill="none" stroke="#3d78b0"/></svg><i class="car" style="margin-left:3px"></i></div>
      <div class="r"><svg class="tb" viewBox="0 0 22 22"><path d="M3 4.500h16M11 7.500h8M11 10.500h8M11 13.500h8M3 16.500h16" stroke="#666"/><path d="M3 10h7M6 7l-3 3 3 3" fill="none" stroke="#3d78b0" stroke-width="2"/></svg><svg class="tb" viewBox="0 0 22 22"><path d="M3 4.500h16M11 7.500h8M11 10.500h8M11 13.500h8M3 16.500h16" stroke="#666"/><path d="M3 10h7M7 7l3 3-3 3" fill="none" stroke="#3d78b0" stroke-width="2"/></svg><i class="sep" style="margin:0 7px 0 4px"></i><svg width="18" height="18" viewBox="0 0 18 18"><text class="ab" x="1" y="10" transform="rotate(-45 6 8)">ab</text><path d="M6 17l9-9M12 7.500h3.500V11" fill="none" stroke="#777" stroke-width="1.500"/></svg><i class="car" style="margin-left:2px"></i></div>
      <div class="gl"><span>Alineación</span><svg><use href="#dlg"/></svg></div>
    </div>
    <div class="grp g-num">
      <div class="r"><span class="sel" style="width:78px">General<i class="car"></i></span></div>
      <div class="r sym"><span style="width:22px">$</span><i class="car" style="margin-left:2px"></i><span style="width:30px">%</span><span class="ooo">000</span></div>
      <div class="r dec"><span><u>←</u>,0<br>,00</span><span>,00<br><u>→</u>,0</span></div>
      <div class="gl"><span>Número</span><svg><use href="#dlg"/></svg></div>
    </div>
    <div class="grp g-est">
      <div class="r"><svg width="16" height="16" viewBox="0 0 18 18"><path d="M1 1h13v13H1z" fill="#fff" stroke="#888"/><path d="M1 1h8v3.500H1zM1 9.500h4V14H1z" fill="#d8492b"/><path d="M1 5h6v4H1z" fill="#b6cce2"/><path d="M7.500 7.500h10v10h-10z" fill="#fff" stroke="#666"/><path d="M10 11.500h5M10 13.500h5M14 9.500l-3 6" stroke="#333"/></svg>Formato condicional</div>
      <div class="r"><svg width="16" height="18" viewBox="0 0 18 18"><use href="#brush"/></svg>Dar formato como tabla</div>
      <div class="r"><svg width="16" height="18" viewBox="0 0 18 18"><use href="#brush"/></svg>Estilos de celda</div>
      <div class="gl"><span>Estilos</span></div>
    </div>
  </div>

  <div class="fx">
    <div class="nb">A1<i class="car c2"></i></div>
    <div class="dots"><i></i><i></i><i></i></div>
    <div class="fxb"><svg width="106" height="24" viewBox="0 0 106 24"><path d="M12 7l10 10M22 7L12 17" stroke="#b9b9b9" stroke-width="1.600"/><path d="M47 13l4 4 9-10" fill="none" stroke="#c1c1c1" stroke-width="2.400"/><text class="fxt" x="84" y="16">f</text><text class="fxt s" x="89" y="17">x</text></svg></div>
    <div class="fin">Rechazo Id</div>
  </div>

  <div class="sheet">
    <div class="row ch"><b></b><span class="a">A</span><span>B</span><span>C</span><span>D</span><span>E</span><span>F</span><span>G</span><span>H</span></div>
    <div class="row"><b class="a">1</b><span class="h selc">Rechazo Id</span><span class="c3 h">Rechazo Descripcion</span><span></span><span></span><span></span><span></span></div>
    <div class="row"><b>2</b><span class="n">22</span><span class="c3">adulto</span><span></span><span></span><span></span><span></span></div>
    <div class="row"><b>3</b><span class="n">1</span><span class="c3">Baja Capacidad</span><span></span><span></span><span></span><span></span></div>
    <div class="row"><b>4</b><span class="n">2</span><span class="c3">Causas Judiciales</span><span></span><span></span><span></span><span></span></div>
    <div class="row"><b>5</b><span class="n">3</span><span class="c3">Falta Informacion</span><span></span><span></span><span></span><span></span></div>
    <div class="row"><b>6</b><span class="n">4</span><span class="c3">Fuera de Politica</span><span></span><span></span><span></span><span></span></div>
    <div class="row"><b>7</b><span class="n">6</span><span class="c4">Morosidad Conyuge</span><span></span><span></span><span></span></div>
    <div class="row"><b>8</b><span class="n">5</span><span class="c4">Morosidades e Impagos</span><span></span><span></span><span></span></div>
    <div class="row"><b>9</b><span class="n">0</span><span class="c3">Sin Rechazo</span><span></span><span></span><span></span><span></span></div>
    <div class="row"><b>10</b><span class="n">7</span><span class="c4">Sin Respaldo Financiero</span><span></span><span></span><span></span></div>
    <div class="row"><b>11</b><span></span><span></span><span></span><span></span><span></span><span></span><span></span><span></span></div>
    <div class="row"><b>12</b><span></span><span></span><span></span><span></span><span></span><span></span><span></span><span></span></div>
    <div class="row"><b>13</b><span></span><span></span><span></span><span></span><span></span><span></span><span></span><span></span></div>
    <div class="row"><b>14</b><span></span><span></span><span></span><span></span><span></span><span></span><span></span><span></span></div>
    <div class="row"><b>15</b><span></span><span></span><span></span><span></span><span></span><span></span><span></span><span></span></div>
    <i class="handle"></i>
  </div>
  <div class="stabs">
    <i class="la"></i><i class="ra"></i><span class="stab">Sheet1</span>
    <svg width="16" height="16" viewBox="0 0 16 16"><circle cx="8" cy="8" r="7.300" fill="none" stroke="#777"/><path d="M8 4v8M4 8h8" stroke="#666" stroke-width="1.800"/></svg>
    <div class="dots"><i></i><i></i><i></i></div><span class="sbtn"><i class="la"></i></span><span class="strk"></span>
  </div>
  <div class="status"><span>Listo</span><div class="v on"><svg width="14" height="14" viewBox="0 0 14 14"><path d="M.5.5h12v12H.5zM4.500.5v12M8.500.5v12M.5 4.500h12M.5 8.500h12" fill="none" stroke="#666"/></svg></div><div class="v"><svg width="14" height="14" viewBox="0 0 14 14"><path d="M.5.5h12.500v12.500H.5zM3.500 2.500h7v8.500h-7zM5 5h4M5 7h4M5 9h4" fill="none" stroke="#666"/></svg></div></div>
</section>
</div>
</body>
</html>
```
FILE: styles.css
```css
* { box-sizing: border-box; }
html, body { margin: 0; padding: 0; overflow: hidden; }
body { width: 1366px; height: 768px; font-family: "Open Sans", sans-serif; }
svg { display: block; flex: none; }
i, em { font-style: normal; }
h1, h2, ul, li { margin: 0; padding: 0; list-style: none; }
.defs { position: absolute; }
.screen { position: relative; width: 1366px; height: 768px; overflow: hidden; display: flex; flex-direction: column; background: #fff; }

/* browser tabs */
.tabs { height: 34px; flex: none; background: #e6e9ec; display: flex; align-items: center; padding-left: 9px; }
.tab { width: 26px; height: 20px; border-right: 1px solid #a6a9ad; display: flex; align-items: center; justify-content: center; flex: none; }
.tab.w27 { width: 27px; }
.tab svg { width: 16px; height: 16px; }
.tab.bare { border-right-color: transparent; width: 25px; }
.tab.on { width: 32px; height: 34px; background: #fff; border: 0; border-radius: 8px 8px 0 0; }
.fav { font-size: 14px; line-height: 20px; }
.brk { color: #f4622a; font: bold 17px/20px Lato, sans-serif; letter-spacing: -.5px; margin-top: -3px; }
.wiki { width: 16px; height: 16px; background: #fff; border-radius: 3px; font: 15px/16px "Liberation Serif", serif; text-align: center; }
.cut { width: 13px; font-size: 12px; overflow: hidden; background: linear-gradient(90deg, #75787c 50%, #e6e9ec 95%); -webkit-background-clip: text; background-clip: text; color: transparent; }
.newtab { width: 12px; height: 12px; margin-left: 16px; }
.winbtns { width: 104px; height: 12px; margin: -7px 0 0 75px; }

/* address bar */
.bar { height: 37px; flex: none; display: flex; align-items: center; border-bottom: 1px solid #b6b4b6; }
.nav { width: 84px; height: 20px; margin-left: 13px; }
.omni { width: 1183px; height: 28px; margin-left: 11px; border-radius: 14px; background: #f1f3f4; display: flex; align-items: center; padding-left: 10px; font-size: 13.500px; color: #5f6368; flex: none; white-space: nowrap; }
.info { width: 16px; height: 16px; }
.unsafe { margin-left: 8px; width: 82px; }
.vline { width: 1px; height: 16px; background: #9aa0a6; margin: 0 9px 0 8px; }
.url { width: 345px; color: #80868b; letter-spacing: -.17px; }
.url b { font-weight: 400; color: #202124; }
.omni-r { width: 48px; height: 16px; margin-left: 646px; }
.avatar { width: 20px; height: 20px; margin-left: 12px; }
.upd { width: 16px; height: 16px; margin-left: 13px; }

/* web page */
.page { flex: 1; display: flex; flex-direction: column; min-height: 0; }
.brand { height: 101px; padding-top: 23px; flex: none; }
.logo1 { font: 300 25px "Open Sans", sans-serif; fill: #111; stroke: #111; stroke-width: .4; }
.logo2 { font: italic 6px "Liberation Sans", sans-serif; fill: #222; stroke: #222; stroke-width: .15; }
.menu { height: 23px; flex: none; display: flex; background: linear-gradient(#e3b9b9 0, #c77375 44%, #a93236 46%, #b84448 56%, #d07a7d 92%, #dc9598 100%); font: 12px/26px "DejaVu Sans", sans-serif; letter-spacing: -.38px; color: #fff; white-space: nowrap; }
.menu a { display: flex; flex: none; padding-left: 1px; gap: 9px; }
.menu svg { width: 13px; height: 13px; margin-top: 4px; }
.cols { flex: 1; display: flex; min-height: 0; }
.side { width: 198px; padding: 7px 1px 0 0; flex: none; overflow: hidden; display: flex; flex-direction: column; }
.box { border-left: 1px solid #c8c8c8; display: flex; flex-direction: column; }
.b1 { height: 250px; }
.b2 { height: 259px; }
.cap { height: 20px; flex: none; border-top: 2px solid #ccc; background: linear-gradient(#d08f8f, #b85653 25%, #993230 52%, #b14b49 65%, #d08a8a); color: #fff; font: bold 10px/16px "DejaVu Sans", "Open Sans", sans-serif; letter-spacing: -.68px; display: flex; white-space: nowrap; }
.b1 .cap { letter-spacing: -.68px; }
.b2 .cap { height: 21px; border-top-width: 3px; }
.grip { width: 8px; height: 12px; margin: 1px 7px 0 4px; background: radial-gradient(circle, #e9bcbc 0 .8px, transparent 1px) 0 0/2.700px 2.700px; }
.body { flex: 1; display: flex; min-height: 0; }
.list { flex: 1; overflow: hidden; font: 10.100px/13px Lato, sans-serif; color: #777; padding-top: 1px; }
.list.two { padding-top: 0; }
.list li { height: 29px; display: flex; align-items: center; flex: none; }
.list .ic { width: 20px; height: 24px; margin-left: 7px; flex: none; }
.list .sh { height: 22px; }
.list.two .ic { width: 23px; height: 23px; margin-left: 5px; }
.list.two .tall { height: 28px; }
.list b { width: 34px; text-align: right; font-weight: 400; font-size: 10.500px; flex: none; }
.list.two b { width: 32px; }
.list a, .list span:not(.ic) { margin-left: 23px; white-space: nowrap; }
.list a, .d a { color: #2a5877; text-decoration: underline; }
.list .tot { font-weight: 700; font-size: 11px; color: #666; height: 25px; }
.list .tot b { font-weight: 700; font-size: 11px; }
.c-green { color: #1f9d1f; } .c-yel { color: #f4bd19; } .c-red { color: #cf1111; }
.sb { width: 16px; background: #f1f1f1; display: flex; flex-direction: column; align-items: center; padding: 6px 0 5px; }
.up, .down { border: 4px solid transparent; border-top: 0; border-bottom: 4px solid #a3a3a3; }
.down { border-bottom: 0; border-top: 4px solid #505050; }
.thumb { width: 13px; flex: 1; background: #c1c1c1; margin: 6px 0 8px; }
.b2 .sb { padding-bottom: 0; }
.work { flex: 1; min-width: 0; overflow: hidden; }
.work h1 { font: bold small-caps 12.600px/20px Lato, sans-serif; letter-spacing: .48px; color: #067c83; margin: 14px 0 4px 4px; }
.filter { border-left: 1px solid #ccc; border-bottom: 1px solid #ccc; height: 42px; }
.filter .cap { font-family: Lato, sans-serif; font-weight: 900; font-size: 11px; letter-spacing: .1px; }
.frow { display: flex; align-items: center; height: 21px; font: bold 9.500px Lato, sans-serif; letter-spacing: -.22px; color: #666; }
.frow label { width: 104px; margin-left: 47px; }
.frow input { width: 215px; height: 16px; border: 1px solid #b5b5b5; border-top-color: #777; border-left-color: #777; margin: -2px 0 0; background: #fff; }
.acts { display: flex; gap: 5px; padding: 4px 0 0 3px; height: 26px; }
.acts svg { width: 14px; height: 14px; }
.grid { margin-left: 5px; font: 10.050px/15px Lato, sans-serif; color: #777; }
.gr { display: flex; height: 16px; margin-bottom: 1px; gap: 1px; }
.gr span { width: 39px; background: #efefef; flex: none; display: flex; align-items: flex-start; }
.gr.alt span { background: #e4e4e4; }
.gr .n { width: 371px; justify-content: flex-end; }
.gr .d { width: 690px; padding-left: 5px; }
.gr.hd { height: 19px; line-height: 19px; }
.gr.hd span { background: linear-gradient(#e8b9b9, #dc9a9b 50%, #e9b9b9); color: #fff; font-weight: 700; }
.gr.hd .n { padding-right: 3px; }
.gr.hd .d { padding-left: 8px; }
.e { width: 14px; height: 14px; margin: 1px 0 0 4px; }
.x { width: 12px; height: 12px; margin: 2px 0 0 7px; }
.foot { height: 19px; background: linear-gradient(#dd9596, #e3a9a9 85%, #efcaca); padding-left: 525px; margin-top: 2px; }
.pagesb { width: 17px; justify-content: flex-end; flex: none; padding-bottom: 7px; }
.hs { height: 17px; background: #f1f1f1; flex: none; display: flex; align-items: center; padding-left: 6px; }
.la, .ra { border: 4px solid transparent; border-left: 0; border-right: 4px solid #a3a3a3; flex: none; }
.ra { border-right: 0; border-left: 4px solid #505050; }
.hthumb { width: 1314px; height: 13px; background: #c1c1c1; margin: -1px 8px 0 7px; }
.hs .corner { width: 17px; height: 17px; background: #dcdcdc; margin-left: auto; }

/* taskbar */
.task { height: 40px; flex: none; background: linear-gradient(90deg, #0e151d, #111b25 50%, #191d27); display: flex; }
.sys, .app { display: flex; align-items: center; justify-content: center; width: 48px; height: 40px; flex: none; }
.app { width: 40px; margin-right: 9px; border-bottom: 3px solid transparent; padding-top: 3px; }
.first { margin-left: 7px; }
.app svg { width: 24px; height: 24px; }
.app svg.sm { width: 22px; height: 22px; }
.run { border-bottom-color: #76b9ed; }
.multi { border-image: linear-gradient(90deg, #76b9ed 32px, #5688b0 32px) 3; border-top: 0; border-left: 0; border-right: 0; }
.cur.app { width: 48px; margin: 0 0 0 20px; background: #464b52; border-bottom-color: #76b9ed; }
.tray { display: flex; align-items: center; margin-left: 273px; color: #fff; font-size: 11.500px; }
.t1 { width: 16px; height: 16px; } .t2 { width: 12px; height: 8px; margin-left: 22px; }
.t3 { width: 17px; height: 16px; margin: 0 0 0 9px; } .t4 { width: 16px; height: 16px; margin-left: 8px; }
.esp { width: 19px; margin-left: 12px; letter-spacing: -.5px; }
.clock { width: 66px; margin: -2px 0 0 11px; display: flex; flex-direction: column; align-items: center; line-height: 18px; letter-spacing: -.1px; flex: none; white-space: nowrap; font-size: 11.300px; }
.clock span:first-child { letter-spacing: -.6px; }
.noti { margin-left: 14px; position: relative; }
.noti svg { width: 16px; height: 16px; }
.noti em { position: absolute; left: 6px; top: 6px; width: 17px; height: 17px; border-radius: 9px; background: #3b3f45; border: 1px solid #a5a7aa; text-align: center; font: bold 11px/15px "Open Sans", sans-serif; }
.peek { width: 1px; height: 40px; background: #6a6e75; margin-left: 20px; }

/* spreadsheet window */
.excel { position: absolute; left: 847px; top: 62px; width: 560px; height: 569px; border: 1px solid #217346; border-bottom-width: 2px; background: #e6e6e6; box-shadow: 0 1px 7px 2px rgba(0,0,0,.5); display: flex; flex-direction: column; overflow: hidden; color: #444; font-size: 11.300px; }
.xtitle { height: 35px; background: #217346; display: flex; position: relative; flex: none; margin-top: -1px; color: #fff; }
.birds { position: absolute; left: 248px; top: 0; width: 270px; height: 60px; }
.qat { width: 112px; height: 18px; margin: 7px 0 0 21px; position: relative; }
.xname { margin: 10px 0 0 130px; line-height: 20px; position: relative; white-space: nowrap; }
.xtabs { height: 25px; background: #217346; color: #fff; display: flex; flex: none; line-height: 26px; font-size: 12px; letter-spacing: -.22px; }
.xtabs, .xtabs span { white-space: nowrap; flex: none; }
.xtabs span { text-align: center; position: relative; }
.xtabs span:first-child { padding-right: 4px; line-height: 28px; }
.xtabs .cur { background: #f1f1f1; color: #217346; }
.xtabs svg { width: 12px; height: 16px; margin: 5px 0 0 11px; position: relative; }
.ribbon { height: 93px; background: #f1f1f1; border-bottom: 1px solid #d2d2d2; display: flex; flex: none; padding-top: 3px; }
.grp { border-right: 1px solid #d5d5d5; height: 85px; flex: none; padding-left: 4px; }
.g-clip { width: 90px; } .g-font { width: 140px; } .g-ali { width: 113px; } .g-num { width: 87px; } .g-est { width: 170px; padding-left: 7px; }
.g-est .r { font-size: 11.700px; }
.r { height: 23px; display: flex; align-items: center; white-space: nowrap; }
.clip { height: 69px; display: flex; }
.paste { width: 45px; display: flex; flex-direction: column; align-items: center; padding-top: 5px; line-height: 18px; font-size: 12px; letter-spacing: -.2px; }
.paste svg { margin-left: 4px; }
.paste .car { margin-top: 4px; }
.cc { padding-left: 2px; }
.car { border: 3px solid transparent; border-top-color: #666; border-bottom: 0; flex: none; }
.car.c2 { border-width: 5px 4px 0; }
.gl { height: 20px; line-height: 24px; display: flex; position: relative; margin-left: -4px; letter-spacing: -.1px; color: #666; }
.gl span { flex: 1; text-align: center; padding-right: 14px; }
.gl svg { width: 8px; height: 8px; position: absolute; right: 4px; top: 9px; }
.g-est .gl { margin-left: -7px; }
.g-est .gl span { padding: 0; }
.g-clip .gl span { text-align: left; padding: 0 0 0 3px; letter-spacing: -.25px; }
.g-font .gl span { padding-right: 17px; }
.sel { height: 23px; background: #fff; border: 1px solid #ababab; display: flex; align-items: center; justify-content: space-between; padding: 0 3px 0 2px; margin-right: 1px; }
.tb { width: 22px; height: 22px; text-align: center; line-height: 22px; font-size: 12.500px; flex: none; }
.tb.on { background: #c5c5c5; }
.it { font-style: italic; } .un { text-decoration: underline; }
.tb.big { font-size: 15px; width: 15px; } .tb.mid { font-size: 13px; width: 14px; margin-left: 4px; }
.tup, .tdn { border: 3px solid transparent; border-top: 0; border-bottom: 3px solid #3d78b0; margin: -12px 0 0 -3px; }
.tdn { border-bottom: 0; border-top: 3px solid #3d78b0; }
.sep { width: 1px; height: 22px; background: #d0d0d0; }
.fcol { width: 16px; height: 16px; margin-left: 6px; font-size: 14px; line-height: 12px; font-weight: 600; text-align: center; border-bottom: 4px solid #f00; }
.ab { font: bold 9.500px "Open Sans", sans-serif; fill: #555; }
.sym span { font-size: 15px; text-align: center; }
.sym .ooo { font-size: 9px; font-weight: 600; width: 16px; letter-spacing: -.2px; }
.dec span { width: 22px; font: 600 8px/9px "Open Sans", sans-serif; text-align: right; padding-right: 5px; letter-spacing: -.3px; margin-top: -3px; }
.dec u { text-decoration: none; color: #3d78b0; }
.g-est .r svg { margin: 0 4px 0 -1px; }
.fx { height: 46px; flex: none; display: flex; padding: 10px 0 0 5px; }
.fx > div { height: 26px; flex: none; }
.nb { width: 102px; background: #fdfdfd; border: 1px solid #c6c6c6; display: flex; justify-content: space-between; align-items: center; padding: 0 5px 0 6px; font: 13px Lato, sans-serif; }
.dots { width: 30px; display: flex; flex-direction: column; align-items: center; justify-content: center; gap: 2px; flex: none; }
.dots i { width: 2px; height: 2px; background: #b5b5b5; }
.fxb { width: 110px; background: #fdfdfd; border: 1px solid #c6c6c6; padding-left: 1px; }
.fxt { font: italic bold 14px "Liberation Serif", serif; fill: #555; }
.fxt.s { font-size: 11px; }
.fin { margin-left: 3px; width: 400px; background: #fdfdfd; border: 1px solid #c6c6c6; padding-left: 11px; font: 13.600px/24px Lato, sans-serif; }
.sheet { height: 320px; flex: none; overflow: hidden; background: #fff; font: 13.600px/20px Lato, sans-serif; letter-spacing: .2px; color: #000; border-bottom: 1px solid #9b9b9b; position: relative; }
.handle { position: absolute; left: 87px; top: 37px; width: 5px; height: 5px; background: #217346; border: solid #fff; border-width: 1px 0 0 1px; z-index: 2; box-sizing: content-box; }
.row { display: flex; height: 20px; width: 700px; }
.row b { width: 26px; background: #e6e6e6; border-right: 1px solid #9b9b9b; border-bottom: 1px solid #b7b7b7; font-weight: 400; font-size: 13.300px; text-align: center; flex: none; }
.row span { width: 64px; border-right: 1px solid #d4d4d4; border-bottom: 1px solid #d4d4d4; flex: none; padding-left: 2px; white-space: nowrap; }
.row .c3 { width: 192px; } .row .c4 { width: 256px; }
.row .n { text-align: right; padding-right: 1px; letter-spacing: 0; font-size: 13.300px; }
.row .h { font-weight: 700; font-size: 13.300px; letter-spacing: .17px; color: #000080; overflow: hidden; }
.row.ch { line-height: 21px; }
.row.ch span { background: #e6e6e6; text-align: center; border-right-color: #b0b0b0; border-bottom-color: #9b9b9b; padding: 0; }
.row.ch b { background: linear-gradient(135deg, transparent 50%, #b4b4b4 50%) 10px 3px/13px 13px no-repeat #e6e6e6; border-color: #9b9b9b; }
.row .a, .row.ch .a { background: #d2d2d2; color: #217346; }
.row .selc { outline: 2px solid #217346; outline-offset: -1px; position: relative; z-index: 1; border-color: transparent; }
.stabs { height: 27px; flex: none; display: flex; align-items: center; }
.stabs .la { margin-left: 27px; border-right-color: #bbb; }
.stabs .ra { margin-left: 25px; border-left-color: #bbb; }
.stab { width: 65px; height: 25px; margin: -3px 33px 0 40px; background: #fff; border-bottom: 2px solid #217346; border-left: 1px solid #9b9b9b; border-right: 1px solid #9b9b9b; color: #217346; font: bold 12.700px/26px "Open Sans", sans-serif; text-align: center; letter-spacing: -.5px; flex: none; }
.stabs .dots { margin-left: 224px; }
.sbtn { width: 16px; height: 15px; background: #fff; border: 1px solid #ababab; display: flex; align-items: center; justify-content: center; flex: none; }
.stabs .sbtn .la { margin: 0; border-right-color: #555; }
.strk { width: 80px; height: 15px; background: #fff; border: 1px solid #ababab; flex: none; }
.status { flex: 1; border-top: 1px solid #c6c6c6; background: #f1f1f1; display: flex; align-items: center; padding-left: 7px; font-size: 11.300px; }
.status span { width: 440px; flex: none; margin-top: -2px; }
.v { width: 38px; height: 100%; display: flex; align-items: center; justify-content: center; flex: none; }
.v.on { background: #cacaca; }
```
